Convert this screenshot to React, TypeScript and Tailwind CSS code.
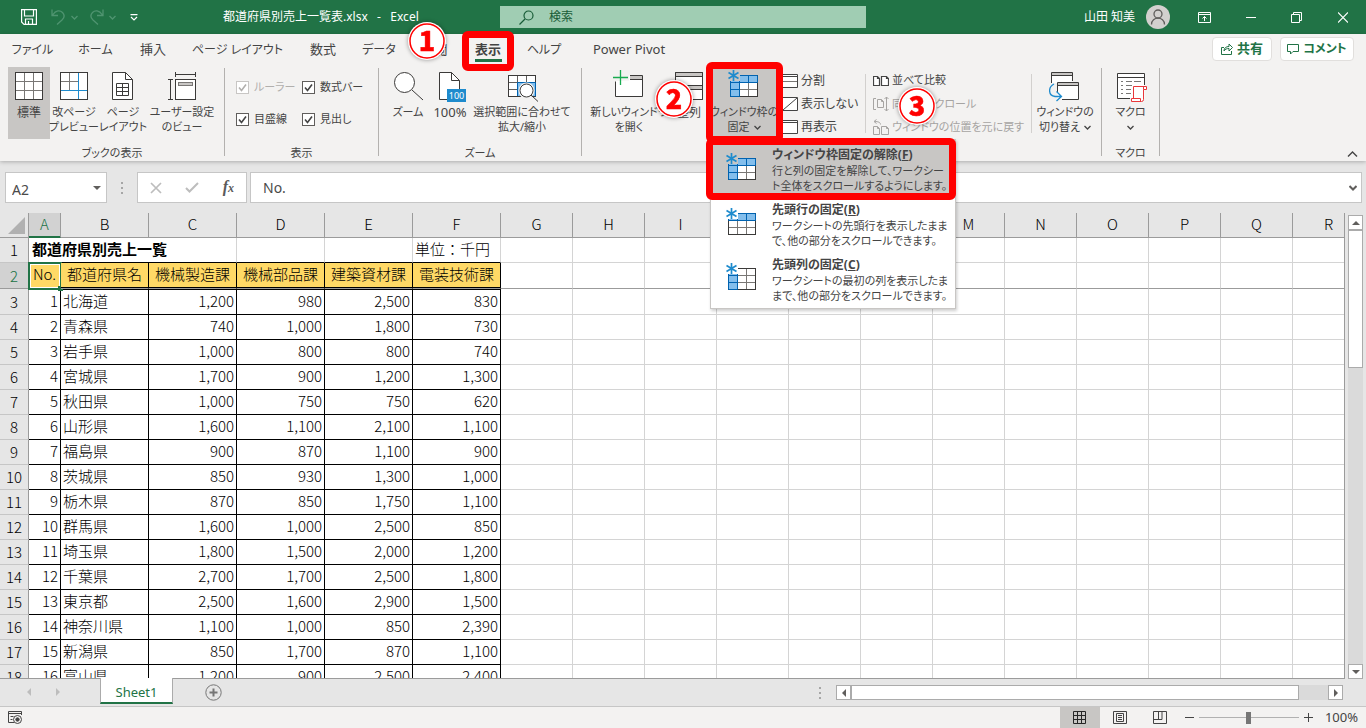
import React from 'react';
import clsx from 'clsx';

const tabs = [
  { label: 'ファイル', width: 'w-[65px]', size: 'text-xs' },
  { label: 'ホーム', width: 'w-[61px]', size: 'text-xs' },
  { label: '挿入', width: 'w-[54px]', size: 'text-[13px]' },
  { label: 'ページ レイアウト', width: 'w-[115px]', size: 'text-xs' },
  { label: '数式', width: 'w-[56px]', size: 'text-[13px]' },
  { label: 'データ', width: 'w-[56px]', size: 'text-xs' },
  { label: '校閲', width: 'w-[55px]', size: 'text-[13px]', step: '1' },
  { label: '表示', width: 'w-[52px]', size: 'text-[13px]', active: true },
  { label: 'ヘルプ', width: 'w-[60px]', size: 'text-xs' },
  { label: 'Power Pivot', width: 'w-[110px]', size: 'text-[13px]' },
];

const columns = ['A', 'B', 'C', 'D', 'E', 'F', 'G', 'H', 'I', 'J', 'K', 'L', 'M', 'N', 'O', 'P', 'Q', 'R'];
const emptyColumns = columns.slice(6);
const headings = ['No.', '都道府県名', '機械製造課', '機械部品課', '建築資材課', '電装技術課'];

const sales: [string, string, string, string, string][] = [
  ['北海道', '1,200', '980', '2,500', '830'],
  ['青森県', '740', '1,000', '1,800', '730'],
  ['岩手県', '1,000', '800', '800', '740'],
  ['宮城県', '1,700', '900', '1,200', '1,300'],
  ['秋田県', '1,000', '750', '750', '620'],
  ['山形県', '1,600', '1,100', '2,100', '1,100'],
  ['福島県', '900', '870', '1,100', '900'],
  ['茨城県', '850', '930', '1,300', '1,000'],
  ['栃木県', '870', '850', '1,750', '1,100'],
  ['群馬県', '1,600', '1,000', '2,500', '850'],
  ['埼玉県', '1,800', '1,500', '2,000', '1,200'],
  ['千葉県', '2,700', '1,700', '2,500', '1,800'],
  ['東京都', '2,500', '1,600', '2,900', '1,500'],
  ['神奈川県', '1,100', '1,000', '850', '2,390'],
  ['新潟県', '850', '1,700', '870', '1,100'],
  ['富山県', '1,200', '900', '2,500', '2,400'],
];

/* ---------- icons ---------- */

const BigSvg: React.FC<{ children: React.ReactNode }> = ({ children }) => (
  <svg width="32" height="32" viewBox="0 0 32 32" fill="none" stroke="#3b3a39" className="shrink-0">
    {children}
  </svg>
);

const NormalViewIcon = () => (
  <BigSvg>
    <rect x="2.5" y="2.5" width="27" height="27" fill="#fff" />
    <path d="M11.5 3v26M20.5 3v26M3 11.5h26M3 20.5h26" stroke="#797775" />
    <rect x="2.5" y="2.5" width="27" height="27" />
  </BigSvg>
);

const PageBreakIcon = () => (
  <BigSvg>
    <rect x="2.5" y="2.5" width="27" height="27" fill="#fff" />
    <path d="M11.5 3v17M3 11.5h17" stroke="#797775" />
    <rect x="2.5" y="2.5" width="27" height="27" />
    <path d="M20.5 3v26M3 20.5h26" stroke="#1e8bcd" />
  </BigSvg>
);

const PageLayoutIcon = () => (
  <BigSvg>
    <path d="M5.5 2.5h13l7 7v20h-20z" fill="#fff" />
    <path d="M18.5 2.5v7h7" />
    <path d="M9.5 13.5h12v12h-12zM9.500 17.5h12M9.500 21.5h12M15.5 13.5v12" />
  </BigSvg>
);

const CustomViewIcon = () => (
  <BigSvg>
    <rect x="9.5" y="9.5" width="20" height="20" fill="#fff" />
    <rect x="12.5" y="12.5" width="14" height="3" fill="#c8c6c4" stroke="#797775" />
    <path d="M9.5 2v5M29.5 2v5M9.5 4.5h20M2 9.5h5M2 29.5h5M4.5 9.5v20" />
  </BigSvg>
);

const ZoomIcon = () => (
  <BigSvg>
    <circle cx="12.5" cy="12.5" r="10" fill="#fff" />
    <path d="M20 20l11 10" />
  </BigSvg>
);

const Zoom100Icon = () => (
  <BigSvg>
    <path d="M13 29.5H5.5v-27h12l8 8v9" fill="#fff" />
    <path d="M17.5 2.5v8h8" />
    <rect x="13" y="19" width="19" height="13" fill="#1e8bcd" stroke="none" />
    <text x="22.5" y="29" textAnchor="middle" fontSize="9" fontFamily="Noto Sans, sans-serif" fill="#fff" stroke="none">
      100
    </text>
  </BigSvg>
);

const ZoomSelectionIcon = () => (
  <BigSvg>
    <rect x="2.5" y="5.5" width="27" height="21" fill="#fff" />
    <path d="M11 12h18v14H11z" fill="#83beec" stroke="none" />
    <path d="M11.5 6v20M20.5 6v6M3 12.5h26M3 19.5h8" stroke="#605e5c" />
    <path d="M13 26.5H2.5v-21h27V12" />
    <path d="M11.5 26V12.5h18V26.500" stroke="#0063b1" />
    <circle cx="20.5" cy="20.5" r="8" fill="#f3f2f1" stroke="none" />
    <circle cx="20.5" cy="20.5" r="6.5" fill="#fff" />
    <path d="M25 25l7 6.500" />
  </BigSvg>
);

const NewWindowIcon = () => (
  <BigSvg>
    <path d="M2.5 11v15.500h27v-21H16v5z" fill="#fff" stroke="none" />
    <path d="M17 6h12v3H17z" fill="#c8c6c4" stroke="none" />
    <path d="M2.5 11.500v15h27v-21H17M17 9.500h12" />
    <path d="M7.5 0v15M0 7.500h15" stroke="#18ab50" strokeWidth="1.300" />
  </BigSvg>
);

const ArrangeIcon = () => (
  <BigSvg>
    <path d="M2.5 2.5h27v13h-27zM2.5 15.5h27v14h-27z" fill="#fff" />
    <path d="M3 3h26v3H3zM3 16h26v3H3z" fill="#c8c6c4" stroke="none" />
    <path d="M2.5 6.5h27M2.5 19.5h27M2.5 2.5h27v13h-27zM2.5 15.5h27v14h-27z" />
  </BigSvg>
);

const FreezeIcon: React.FC<{ row?: boolean; col?: boolean }> = ({ row, col }) => (
  <BigSvg>
    <rect x="2.5" y="5.5" width="27" height="21" fill="#fff" />
    {row && <rect x="3" y="6" width="26" height="7" fill="#83beec" stroke="none" />}
    {col && <rect x="3" y="6" width="8" height="20" fill="#83beec" stroke="none" />}
    <path d="M11.5 6v20M20.5 6v20M3 12.5h26M3 19.5h26" stroke="#797775" />
    <rect x="2.5" y="5.5" width="27" height="21" />
    {row && <path d="M2.5 12.5v-7h27v7zM11.5 6v6M20.5 6v6" stroke="#0063b1" />}
    {col && <path d="M2.500 5.5h9v21h-9zM3 12.5h8M3 19.5h8" stroke="#0063b1" />}
    <path d="M0 0h12v11H0z" fill="currentColor" stroke="none" />
    <path d="M5.5 0v11M.5 2.500l10 6M10.5 2.500l-10 6" stroke="#1e8bcd" strokeWidth="1.700" />
  </BigSvg>
);

const SwitchIcon = () => (
  <BigSvg>
    <path d="M2.5 2.5h21v17h-21z" fill="#fff" stroke="none" />
    <path d="M3 3h20v2.500H3z" fill="#c8c6c4" stroke="none" />
    <path d="M2.5 13V2.5h21V11M3 5.5h20" />
    <path d="M0 13h9v17H0z" fill="#f3f2f1" stroke="none" />
    <path d="M8.500 12.5h21v17h-21z" fill="#fff" stroke="none" />
    <path d="M9 13h20v2.500H9z" fill="#c8c6c4" stroke="none" />
    <path d="M8.500 22v-9.500h21v17H13M9 15.5h20" />
    <path d="M5 14C-1 17-1 25.500 6 26.500h6M7.500 21.500l5 5-5 4.500" stroke="#1e8bcd" strokeWidth="1.300" />
  </BigSvg>
);

const MacroIcon = () => (
  <BigSvg>
    <path d="M2.5 3.500h27v25h-27z" fill="#fff" stroke="none" />
    <path d="M15 28.500H2.5v-25h27V15M3 7.500h26" />
    <path d="M6 11.500h2M11 11.500h6M19 11.500h7M6 15.500h2M11 15.500h6M6 19.500h2M11 19.500h5M6 23.500h2M11 23.500h5" stroke="#797775" />
    <path d="M18.500 28.500v-12h13v3h-3v10a2 2 0 0 1-2 2h-10v-3h9v3M28.500 16.500v3" fill="#fff" stroke="#e8373a" />
  </BigSvg>
);

const SmallSvg: React.FC<{ children: React.ReactNode }> = ({ children }) => (
  <svg width="16" height="16" viewBox="0 0 16 16" fill="none" stroke="currentColor" className="shrink-0">
    {children}
  </svg>
);

const SplitIcon = () => (
  <SmallSvg>
    <path d="M.5 1.500h15v13H.5z" fill="#fff" />
    <path d="M1 3.500h14" />
    <path d="M1 8.500h14" stroke="#797775" />
  </SmallSvg>
);

const HideIcon = () => (
  <SmallSvg>
    <path d="M.5 1.500h15v13H.5z" fill="#fff" />
    <path d="M1 14L15 2" />
  </SmallSvg>
);

const UnhideIcon = () => (
  <SmallSvg>
    <path d="M.5 1.500h15v13H.5z" fill="#fff" />
    <path d="M1 3.500h14" />
  </SmallSvg>
);

const SideBySideIcon = () => (
  <SmallSvg>
    <path d="M.5 3.500h4l2 2v7h-6zM8.500 3.500h5l2 2v7h-7zM4.500 3.500v2h2M13.500 3.500v2h2" fill="#fff" strokeWidth="1.200" />
  </SmallSvg>
);

const SyncScrollIcon = () => (
  <SmallSvg>
    <path d="M3 2.500H.5v11H3M4.500 3.500h4l2 2v6h-6zM8.500 3.500v2h2M13.500 1v14M11.500 3l2-2 2 2M11.500 13l2 2 2-2" />
  </SmallSvg>
);

const ResetPositionIcon = () => (
  <SmallSvg>
    <path d="M.5 7.500h4l2 2v6h-6zM8.500 7.500h5l2 2v6h-7zM4.500 7.500v2h2M13.500 7.500v2h2M7.500 5.500c0-2-2-3-6-3M3.500.500l-2.500 2 2.500 2" />
  </SmallSvg>
);

const ChevronDown = () => (
  <svg width="7" height="5" viewBox="0 0 7 5" fill="none" stroke="currentColor" strokeWidth="1.300" className="inline-block">
    <path d="M.5 1l3 3 3-3" />
  </svg>
);

const Triangle: React.FC<{ d: string; className?: string }> = ({ d, className = 'fill-[#605e5c]' }) => (
  <svg width="8" height="8" viewBox="0 0 8 8" className={className}>
    <path d={d} />
  </svg>
);

const Dots = () => (
  <svg width="3" height="12" viewBox="0 0 3 12" fill="#a6a6a6">
    <path d="M0 0h2v2H0zM0 5h2v2H0zM0 10h2v2H0z" />
  </svg>
);

/* ---------- callouts ---------- */

const StepBadge: React.FC<{ n: string; className: string }> = ({ n, className }) => (
  <svg
    width="44"
    height="44"
    viewBox="0 0 44 44"
    className={clsx('pointer-events-none absolute z-30 drop-shadow-[0_0_2px_rgba(0,0,0,0.4)]', className)}
  >
    <circle cx="22" cy="22" r="19" fill="#fff" />
    <circle cx="22" cy="22" r="17" fill="#fff" stroke="#f00" strokeWidth="1.500" />
    <text
      x="22"
      y="32"
      textAnchor="middle"
      fontSize="27"
      fontWeight="900"
      fontFamily="Noto Sans CJK JP, sans-serif"
      fill="#f00"
      stroke="#f00"
      strokeWidth="0.500"
    >
      {n}
    </text>
  </svg>
);

const RedBox: React.FC<{ className: string }> = ({ className }) => (
  <span className={clsx('pointer-events-none absolute rounded-md border-[7px] border-[#ff0000]', className)} />
);

/* ---------- ribbon ---------- */

const BigButton: React.FC<{
  icon: React.ReactNode;
  lines: string[];
  width: string;
  size?: string;
  active?: boolean;
  chevron?: boolean;
}> = ({ icon, lines, width, size = 'text-[11px]', active, chevron }) => (
  <button
    className={clsx(
      'flex h-[72px] shrink-0 flex-col items-center pt-[3px] whitespace-nowrap',
      width,
      size,
      active && 'bg-[#c8c6c4]'
    )}
  >
    <span className={clsx('mb-[3px]', active ? 'text-[#c8c6c4]' : 'text-[#f3f2f1]')}>{icon}</span>
    {lines.map((line, i) => (
      <span key={line} className="flex h-[15px] items-center gap-1">
        {line}
        {chevron && i === lines.length - 1 && <ChevronDown />}
      </span>
    ))}
  </button>
);

const SmallButton: React.FC<{ icon: React.ReactNode; label: string; disabled?: boolean }> = ({ icon, label, disabled }) => (
  <button disabled={disabled} className="flex h-6 items-center gap-[3px] whitespace-nowrap disabled:text-[#a6a4a2]">
    {icon}
    {label}
  </button>
);

const Group: React.FC<{ label: string; width: string; children: React.ReactNode }> = ({ label, width, children }) => (
  <div className={clsx('flex shrink-0', width)}>
    <div className="flex min-w-0 flex-1 flex-col">
      <div className="flex h-[72px]">{children}</div>
      <div className="mt-[6px] text-center text-[11px] leading-4">{label}</div>
    </div>
    <div className="mt-px h-[88px] w-px shrink-0 bg-[#b3b1af]" />
  </div>
);

const Check: React.FC<{ label: string; disabled?: boolean }> = ({ label, disabled }) => (
  <label
    className={clsx('flex h-8 w-[66px] items-center gap-[5px] text-[11px] whitespace-nowrap', disabled && 'text-[#b1afad]')}
  >
    <span className="relative flex size-[13px] shrink-0">
      <input
        type="checkbox"
        defaultChecked
        disabled={disabled}
        className="size-[13px] appearance-none border border-[#605e5c] bg-white disabled:border-[#c8c6c4]"
      />
      <svg viewBox="0 0 13 13" fill="none" stroke="currentColor" strokeWidth="1.600" className="pointer-events-none absolute inset-0">
        <path d="M3 6.500l2.500 3L10 3.500" />
      </svg>
    </span>
    {label}
  </label>
);

const MenuItem: React.FC<{
  icon: React.ReactNode;
  title: string;
  accessKey: string;
  lines: string[];
  active?: boolean;
}> = ({ icon, title, accessKey, lines, active }) => (
  <button
    role="menuitem"
    className={clsx(
      'relative flex h-[55px] w-full gap-[14px] pl-[15px] text-left whitespace-nowrap',
      active && 'bg-[#c8c6c4]'
    )}
  >
    <span className={clsx('pt-[10px]', active ? 'text-[#c8c6c4]' : 'text-white')}>{icon}</span>
    <span className="flex flex-col pt-[3px] text-[11px] leading-[15px]">
      <span className="text-xs leading-[17px] font-bold">
        {title}(<u>{accessKey}</u>)
      </span>
      {lines.map(line => (
        <span key={line}>{line}</span>
      ))}
    </span>
    {active && <RedBox className="-top-[5px] -right-px -bottom-[2px] -left-[5px] z-20" />}
  </button>
);

const FreezePanes = () => (
  <div className="relative">
    <BigButton icon={<FreezeIcon row col />} lines={['ウィンドウ枠の', '固定']} width="w-[70px]" active chevron />
    <RedBox className="-top-[5px] -right-1 -bottom-1 -left-[3px] z-10" />
    <div
      role="menu"
      className="absolute top-[72px] left-px z-20 w-[246px] border border-[#c8c6c4] bg-white pt-[3px] shadow-[1px_2px_3px_rgba(0,0,0,0.2)]"
    >
      <MenuItem
        active
        icon={<FreezeIcon row col />}
        title="ウィンドウ枠固定の解除"
        accessKey="F"
        lines={['行と列の固定を解除して、ワークシー', 'ト全体をスクロールするようにします。']}
      />
      <MenuItem
        icon={<FreezeIcon row />}
        title="先頭行の固定"
        accessKey="R"
        lines={['ワークシートの先頭行を表示したまま', 'で、他の部分をスクロールできます。']}
      />
      <MenuItem
        icon={<FreezeIcon col />}
        title="先頭列の固定"
        accessKey="C"
        lines={['ワークシートの最初の列を表示したま', 'まで、他の部分をスクロールできます。']}
      />
    </div>
  </div>
);

const TitleBar = () => (
  <header className="flex h-[34px] shrink-0 items-center bg-[#217346] text-xs text-white">
    <div className="flex w-[223px] items-center pl-[21px]">
      <button aria-label="上書き保存">
        <svg width="16" height="16" viewBox="0 0 16 16" fill="none" stroke="currentColor" strokeWidth="1.200">
          <path d="M.6.600h14.800v14.800H3L.6 13zM3.500 1v6h9V1M4.500 15v-5h7v5M7.500 12v3" />
        </svg>
      </button>
      <button aria-label="元に戻す" className="ml-[14px] flex items-center gap-[5px] text-[#4f9470]">
        <svg width="15" height="16" viewBox="0 0 15 16" fill="none" stroke="currentColor" strokeWidth="1.300">
          <path d="M1 .5v6h6M1.500 6C5 1 9 1 11.500 3.500c3 3 1 6-.5 7.500l-5 4.500" />
        </svg>
        <ChevronDown />
      </button>
      <button aria-label="やり直し" className="ml-[11px] flex items-center gap-[5px] text-[#4f9470]">
        <svg width="15" height="16" viewBox="0 0 15 16" fill="none" stroke="currentColor" strokeWidth="1.300">
          <path d="M14 .5v6H8M13.500 6C10 1 6 1 3.500 3.500c-3 3-1 6 .5 7.500l5 4.500" />
        </svg>
        <ChevronDown />
      </button>
      <button aria-label="クイック アクセス ツール バーのユーザー設定" className="ml-[14px]">
        <svg width="8" height="7" viewBox="0 0 8 7" fill="none" stroke="currentColor" strokeWidth="1.200">
          <path d="M.5.600h7M1 3l3 3 3-3" />
        </svg>
      </button>
    </div>
    <div className="w-[277px] whitespace-pre">都道府県別売上一覧表.xlsx   -   Excel</div>
    <label className="flex h-[22px] flex-1 items-center gap-[15px] bg-[#a0cdb3] pl-[19px] text-[#185c37]">
      <svg width="15" height="15" viewBox="0 0 15 15" fill="none" stroke="currentColor" strokeWidth="1.200" className="shrink-0">
        <circle cx="9.500" cy="5.500" r="4.500" />
        <path d="M6 9L.5 14.500" />
      </svg>
      <input placeholder="検索" aria-label="検索" className="min-w-0 flex-1 bg-transparent outline-none placeholder:text-[#185c37]" />
    </label>
    <div className="flex w-[500px] items-center justify-end pr-[18px]">
      <span>山田 知美</span>
      <svg width="24" height="24" viewBox="0 0 24 24" fill="none" stroke="#605e5c" strokeWidth="1.300" className="ml-[11px]">
        <circle cx="12" cy="12" r="12" fill="#d2d0ce" stroke="none" />
        <circle cx="12" cy="9" r="4" />
        <path d="M5.500 19.500c0-8.500 13-8.500 13 0" />
      </svg>
      <button aria-label="リボンの表示オプション" className="ml-7">
        <svg width="13" height="11" viewBox="0 0 13 11" fill="none" stroke="currentColor">
          <path d="M.5.500h12v10H.5zM.5 2.500h12M6.500 9V4.500M4.500 6.500l2-2 2 2" />
        </svg>
      </button>
      <button aria-label="最小化" className="ml-[35px]">
        <svg width="10" height="11" viewBox="0 0 10 11" stroke="currentColor">
          <path d="M0 5.500h10" />
        </svg>
      </button>
      <button aria-label="元に戻す (縮小)" className="ml-[35px]">
        <svg width="11" height="11" viewBox="0 0 11 11" fill="none" stroke="currentColor">
          <path d="M.5 2.500h8v8h-8zM2.500 2.500v-2h8v8h-2" />
        </svg>
      </button>
      <button aria-label="閉じる" className="ml-9">
        <svg width="10" height="11" viewBox="0 0 10 11" fill="none" stroke="currentColor" strokeWidth="1.200">
          <path d="M0 .5l10 10M10 .5l-10 10" />
        </svg>
      </button>
    </div>
  </header>
);

const TabBar = () => (
  <nav className="flex h-[33px]">
    {tabs.map(tab => (
      <div key={tab.label} className={clsx('relative shrink-0', tab.width)}>
        <button className={clsx('h-[31px] w-full whitespace-nowrap', tab.size, tab.active && 'font-bold')}>
          {tab.label}
        </button>
        {tab.active && (
          <>
            <span className="absolute top-[25px] left-[13px] h-[3px] w-[27px] bg-[#217346]" />
            <RedBox className="-top-[3px] right-0 -bottom-1 left-0 z-10" />
          </>
        )}
        {tab.step && <StepBadge n={tab.step} className="-top-[15px] -left-[2px]" />}
      </div>
    ))}
    <div className="flex flex-1 justify-end gap-2 pt-[3px] pr-3 font-bold text-[#217346]">
      <button className="flex h-6 w-[60px] items-center justify-center gap-1 rounded-sm border border-[#e1dfdd] bg-white text-[13px]">
        <svg width="12" height="12" viewBox="0 0 12 12" fill="none" stroke="currentColor">
          <path d="M3 4.500H.5v7h10V8M3 8c0-3 2-4.500 5-4.500V1l3.500 3.500L8 8V5.500c-2 0-4 .5-5 2.500z" />
        </svg>
        共有
      </button>
      <button className="flex h-6 w-[74px] items-center justify-center gap-1 rounded-sm border border-[#e1dfdd] bg-white">
        <svg width="12" height="12" viewBox="0 0 12 12" fill="none" stroke="currentColor">
          <path d="M.5 1.500h11v7H6l-2.500 2.500V8.500h-3z" />
        </svg>
        コメント
      </button>
    </div>
  </nav>
);

const Ribbon = () => (
  <div className="relative flex h-[94px]">
    <Group label="ブックの表示" width="w-[225px]">
      <div className="flex pl-2">
        <BigButton icon={<NormalViewIcon />} lines={['標準']} width="w-[42px]" size="text-xs" active />
        <BigButton icon={<PageBreakIcon />} lines={['改ページ', 'プレビュー']} width="w-12" />
        <BigButton icon={<PageLayoutIcon />} lines={['ページ', 'レイアウト']} width="w-[50px]" />
        <BigButton icon={<CustomViewIcon />} lines={['ユーザー設定', 'のビュー']} width="w-[68px]" />
      </div>
    </Group>
    <Group label="表示" width="w-[154px]">
      <div className="flex flex-wrap content-start pt-1 pl-[11px]">
        <Check label="ルーラー" disabled />
        <Check label="数式バー" />
        <Check label="目盛線" />
        <Check label="見出し" />
      </div>
    </Group>
    <Group label="ズーム" width="w-[203px]">
      <div className="flex pl-2">
        <BigButton icon={<ZoomIcon />} lines={['ズーム']} width="w-[42px]" />
        <BigButton icon={<Zoom100Icon />} lines={['100%']} width="w-[42px]" size="text-[13px]" />
        <BigButton icon={<ZoomSelectionIcon />} lines={['選択範囲に合わせて', '拡大/縮小']} width="w-[102px]" />
      </div>
    </Group>
    <Group label="ウィンドウ" width="w-[520px]">
      <div className="flex pl-[7px]">
        <div className="relative">
          <BigButton icon={<NewWindowIcon />} lines={['新しいウィンドウ', 'を開く']} width="w-20" />
          <StepBadge n="2" className="top-[10px] left-[63px]" />
        </div>
        <BigButton icon={<ArrangeIcon />} lines={['整列']} width="w-10" size="text-xs" />
        <FreezePanes />
        <div className="flex w-[86px] flex-col pt-[2px] pl-[3px]">
          <SmallButton icon={<SplitIcon />} label="分割" />
          <SmallButton icon={<HideIcon />} label="表示しない" />
          <SmallButton icon={<UnhideIcon />} label="再表示" />
        </div>
        <div className="relative flex w-[167px] flex-col pt-[2px] pl-2 text-[11px]">
          <span className="absolute top-[7px] left-0 h-[59px] w-px bg-[#d2d0ce]" />
          <SmallButton icon={<SideBySideIcon />} label="並べて比較" />
          <SmallButton icon={<SyncScrollIcon />} label="同時にスクロール" disabled />
          <SmallButton icon={<ResetPositionIcon />} label="ウィンドウの位置を元に戻す" disabled />
          <StepBadge n="3" className="top-[17px] left-[30px]" />
          <span className="absolute top-[7px] right-0 h-[59px] w-px bg-[#d2d0ce]" />
        </div>
        <BigButton icon={<SwitchIcon />} lines={['ウィンドウの', '切り替え']} width="w-[66px]" chevron />
      </div>
    </Group>
    <Group label="マクロ" width="w-[58px]">
      <BigButton icon={<MacroIcon />} lines={['マクロ', '']} width="w-[57px]" chevron />
    </Group>
    <div className="flex flex-1 items-end justify-end pr-2 pb-1">
      <button aria-label="リボンを折りたたむ">
        <svg width="11" height="6" viewBox="0 0 11 6" fill="none" stroke="currentColor" strokeWidth="1.400">
          <path d="M1 5.500l4.500-4.500L10 5.500" />
        </svg>
      </button>
    </div>
  </div>
);

const FormulaBar = () => (
  <div className="flex h-[52px] shrink-0 items-start pt-[11px] pr-1 pl-[5px] text-sm text-[#4a4a4a]">
    <label className="flex h-[31px] w-[102px] items-center border border-[#c6c6c6] bg-white pr-[5px] pl-[6px]">
      <input defaultValue="A2" aria-label="名前ボックス" className="h-full min-w-0 flex-1 pt-1 outline-none" />
      <Triangle d="M0 2h8L4 6z" />
    </label>
    <div className="flex h-[31px] w-[30px] items-center justify-center">
      <Dots />
    </div>
    <div className="flex h-[31px] w-[110px] items-center justify-between border border-[#c6c6c6] bg-white px-3">
      <button aria-label="キャンセル">
        <svg width="12" height="12" viewBox="0 0 12 12" stroke="#bdbdbd" strokeWidth="1.700">
          <path d="M1 1l10 10M11 1L1 11" />
        </svg>
      </button>
      <button aria-label="入力">
        <svg width="14" height="11" viewBox="0 0 14 11" fill="none" stroke="#bdbdbd" strokeWidth="2">
          <path d="M1 6l3.500 3.500L13 1" />
        </svg>
      </button>
      <button aria-label="関数の挿入" className="font-['Liberation_Serif',serif] text-base leading-4 font-bold text-[#5a5a5a] italic">
        f<span className="text-xs">x</span>
      </button>
    </div>
    <label className="ml-[3px] flex h-[31px] flex-1 items-center border border-[#c6c6c6] bg-white pr-1 pl-3">
      <input defaultValue="No." aria-label="数式バー" className="h-full min-w-0 flex-1 outline-none" />
      <svg width="8" height="6" viewBox="0 0 8 6" fill="none" stroke="#605e5c" strokeWidth="2">
        <path d="M.5 1L4 4.500 7.500 1" />
      </svg>
    </label>
  </div>
);

const RowHeader: React.FC<{ n: number; active?: boolean }> = ({ n, active }) => (
  <th
    scope="row"
    className={clsx(
      'border-r border-b p-0 font-light',
      active
        ? 'border-r-[#217346] border-b-[#9b9b9b] bg-[#d2d2d2] text-[#217346]'
        : 'border-r-[#9b9b9b] border-b-[#c6c6c6] bg-[#e6e6e6]'
    )}
  >
    {n}
  </th>
);

const EmptyCells: React.FC<{ frozenEdge?: boolean }> = ({ frozenEdge }) => (
  <>
    {emptyColumns.map(c => (
      <td key={c} className={clsx('border-r border-b border-[#d4d4d4]', frozenEdge && 'border-b-[#9b9b9b]')} />
    ))}
  </>
);

const Sheet = () => (
  <table className="w-[1365px] table-fixed border-separate border-spacing-0 font-['Noto_Sans_CJK_JP',sans-serif] text-[15px] leading-5 font-light whitespace-nowrap text-black">
    <colgroup>
      <col className="w-[29px]" />
      <col className="w-8" />
      {headings.slice(1).map(h => (
        <col key={h} className="w-[88px]" />
      ))}
      {emptyColumns.map(c => (
        <col key={c} className="w-[72px]" />
      ))}
    </colgroup>
    <thead>
      <tr className="h-[25px] bg-[#e6e6e6]">
        <th className="border-r border-b border-[#9b9b9b] p-0">
          <svg width="17" height="17" viewBox="0 0 17 17" className="ml-2 fill-[#b1b1b1]">
            <path d="M17 0v17H0z" />
          </svg>
        </th>
        {columns.map(c => (
          <th
            key={c}
            scope="col"
            className={clsx(
              'border-r border-b border-[#9b9b9b] p-0 pb-[2px] font-light',
              c === 'A' && 'border-b-[#217346] bg-[#d2d2d2] text-[#217346] shadow-[inset_0_-1px_0_#217346]'
            )}
          >
            {c}
          </th>
        ))}
      </tr>
    </thead>
    <tbody>
      <tr className="h-[25px]">
        <RowHeader n={1} />
        <td colSpan={2} className="border-b border-black p-0 pb-[2px] pl-[3px] font-bold">都道府県別売上一覧</td>
        <td className="border-r border-b border-r-[#d4d4d4] border-b-black" />
        <td className="border-r border-b border-r-[#d4d4d4] border-b-black" />
        <td className="border-r border-b border-r-[#d4d4d4] border-b-black" />
        <td className="border-r border-b border-r-[#d4d4d4] border-b-black p-0 pb-[2px] pl-[2px]">単位：千円</td>
        <EmptyCells />
      </tr>
      <tr className="h-[26px]">
        <RowHeader n={2} active />
        {headings.map((h, i) => (
          <td
            key={h}
            className="relative border-r border-b border-r-black border-b-[#9b9b9b] bg-[#ffd966] p-0 pb-[3px] text-center shadow-[inset_0_-1px_0_#000]"
          >
            {h}
            {i === 0 && (
              <span className="absolute -top-px -right-[2px] -bottom-[2px] -left-px border-2 border-[#217346] shadow-[inset_0_0_0_1px_#fff]">
                <span className="absolute -right-[3px] -bottom-[3px] size-[5px] bg-[#217346]" />
              </span>
            )}
          </td>
        ))}
        <EmptyCells frozenEdge />
      </tr>
      {sales.map(([name, ...values], i) => (
        <tr key={name} className={i === 0 ? 'h-[26px]' : 'h-[25px]'}>
          <RowHeader n={i + 3} />
          <td className={clsx('border-r border-b border-black p-0 pr-[2px] pb-[2px] text-right', i === 0 && 'border-t')}>{i + 1}</td>
          <td className={clsx('border-r border-b border-black p-0 pb-[2px] pl-[2px]', i === 0 && 'border-t')}>{name}</td>
          {values.map((v, j) => (
            <td key={j} className={clsx('border-r border-b border-black p-0 pr-[2px] pb-[2px] text-right', i === 0 && 'border-t')}>
              {v}
            </td>
          ))}
          <EmptyCells />
        </tr>
      ))}
    </tbody>
  </table>
);

const scrollButton = 'flex size-[15px] shrink-0 items-center justify-center border border-[#ababab] bg-white';

const VerticalScroll = () => (
  <div className="mt-[2px] mr-[3px] ml-[3px] flex w-[15px] shrink-0 flex-col bg-[#dadada]">
    <button aria-label="上へスクロール" className={scrollButton}>
      <Triangle d="M0 6h8L4 2z" />
    </button>
    <div className="h-[138px] border border-[#ababab] bg-white" />
    <div className="flex-1" />
    <button aria-label="下へスクロール" className={scrollButton}>
      <Triangle d="M0 2h8L4 6z" />
    </button>
  </div>
);

const SheetTabs = () => (
  <div className="flex h-[27px] shrink-0 items-start">
    <div className="flex h-[26px] w-[100px] items-center gap-[21px] pl-[25px]">
      <button aria-label="前のシート"><Triangle d="M6 0v8L2 4z" className="fill-[#bdbdbd]" /></button>
      <button aria-label="次のシート"><Triangle d="M2 0v8l4-4z" className="fill-[#bdbdbd]" /></button>
    </div>
    <button className="-mt-px h-[26px] w-[73px] border-x border-b-2 border-x-[#ababab] border-b-[#217346] bg-white pt-[3px] text-[13px] leading-5 text-[#217346]">
      Sheet1
    </button>
    <button aria-label="新しいシート" className="mt-[5px] ml-8">
      <svg width="17" height="17" viewBox="0 0 17 17" fill="none" stroke="#767676">
        <circle cx="8.500" cy="8.500" r="7.700" />
        <path d="M8.500 4.500v8M4.500 8.500h8" strokeWidth="2" />
      </svg>
    </button>
    <div className="flex flex-1 items-center justify-end pt-[6px] pr-[23px]">
      <Dots />
      <div className="ml-[14px] flex w-[507px] bg-[#dadada]">
        <button aria-label="左へスクロール" className={scrollButton}>
          <Triangle d="M6 0v8L2 4z" />
        </button>
        <div className="h-[15px] w-[448px] border border-[#ababab] bg-white" />
        <div className="flex-1" />
        <button aria-label="右へスクロール" className={scrollButton}>
          <Triangle d="M2 0v8l4-4z" />
        </button>
      </div>
    </div>
  </div>
);

const StatusBar = () => (
  <footer className="flex h-[22px] shrink-0 items-center border-t border-[#c6c6c6] bg-[#f3f2f1] pl-2 text-[#444]">
    <svg width="15" height="13" viewBox="0 0 15 13" fill="none" stroke="currentColor">
      <path d="M6 11.500H.5V.5h13V4M1 2.500h12M2.500 5.500h3M2.500 8.500h2" />
      <circle cx="9.500" cy="8.500" r="4" />
      <circle cx="9.500" cy="8.500" r="1.700" fill="currentColor" />
    </svg>
    <div className="flex h-full flex-1 items-center justify-end pr-2">
      <button aria-label="標準" className="flex h-full w-10 items-center justify-center bg-[#c8c6c4]">
        <svg width="13" height="13" viewBox="0 0 13 13" fill="none" stroke="#262626">
          <path d="M.5.500h12v12H.5zM4.500 1v11M8.500 1v11M1 4.500h11M1 8.500h11" />
        </svg>
      </button>
      <button aria-label="ページ レイアウト" className="flex h-full w-10 items-center justify-center">
        <svg width="14" height="13" viewBox="0 0 14 13" fill="none" stroke="currentColor">
          <path d="M.5.500h13v12H.5zM3.500 2.500h7v8h-7zM5 4.500h4M5 6.500h4M5 8.500h4" />
        </svg>
      </button>
      <button aria-label="改ページ プレビュー" className="flex h-full w-10 items-center justify-center">
        <svg width="14" height="13" viewBox="0 0 14 13" fill="none" stroke="currentColor">
          <path d="M.5.500h13v12H.5zM1 8.500h8V1M5.500 1v7" />
        </svg>
      </button>
      <button aria-label="縮小" className="ml-[5px]">
        <svg width="9" height="9" viewBox="0 0 9 9" stroke="currentColor"><path d="M0 4.500h9" /></svg>
      </button>
      <input
        type="range"
        min={10}
        max={190}
        defaultValue={100}
        aria-label="ズーム"
        className="mx-[5px] h-3 w-[100px] appearance-none bg-[linear-gradient(#b1b1b1,#b1b1b1)] bg-[length:100%_1px] bg-center bg-no-repeat [&::-webkit-slider-thumb]:h-3 [&::-webkit-slider-thumb]:w-[5px] [&::-webkit-slider-thumb]:appearance-none [&::-webkit-slider-thumb]:bg-[#767676]"
      />
      <button aria-label="拡大">
        <svg width="9" height="9" viewBox="0 0 9 9" stroke="currentColor"><path d="M0 4.500h9M4.500 0v9" /></svg>
      </button>
      <button className="ml-3 text-[13px]">100%</button>
    </div>
  </footer>
);

export default function App() {
  return (
    <div className="flex h-screen flex-col overflow-hidden bg-[#e6e6e6] font-['Noto_Sans','Noto_Sans_CJK_JP',sans-serif] text-[#444]">
      <TitleBar />
      <div className="relative z-10 shrink-0 bg-[#f3f2f1] text-xs shadow-[0_1px_4px_rgba(0,0,0,0.25)] [font-feature-settings:'palt']">
        <TabBar />
        <Ribbon />
      </div>
      <FormulaBar />
      <main className="flex min-h-0 flex-1">
        <div className="min-w-0 flex-1 overflow-hidden border-r border-b border-[#9b9b9b] bg-white">
          <Sheet />
        </div>
        <VerticalScroll />
      </main>
      <SheetTabs />
      <StatusBar />
    </div>
  );
}
